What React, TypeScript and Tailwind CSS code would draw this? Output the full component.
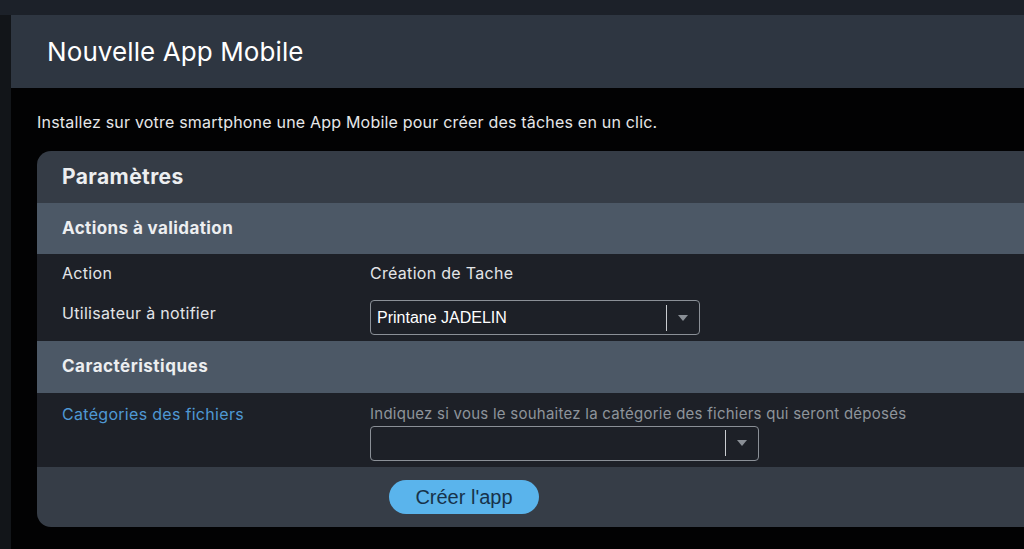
import React from "react";

const Caret: React.FC = () => (
    <svg width="10" height="6" viewBox="0 0 10 6" className="block">
        <path d="M0 0 L10 0 L5 6 Z" fill="#8a8f96" />
    </svg>
);

const SelectBox: React.FC<{ value?: string; width: string }> = ({ value, width }) => (
    <div className={`${width} h-[35px] flex items-center border border-[#8b9097] rounded-[4px] bg-[#1d2027]`}>
        <span className="flex-1 pl-[6px] text-[16px] text-white font-['Liberation_Sans',sans-serif]">{value}</span>
        <span className="w-px h-[26px] bg-[#c9ccd0]" />
        <span className="w-[32px] flex justify-center">
            <Caret />
        </span>
    </div>
);

const App: React.FC = () => {
    return (
        <div className="w-[1024px] h-[549px] overflow-hidden flex flex-col bg-[#1c2129] font-['Inter',sans-serif]">
            <div className="h-[15px] shrink-0 bg-[#1c2129]" />
            <div className="flex flex-1 min-h-0">
                <div className="w-[11px] shrink-0 bg-[#121519]" />
                <div className="flex-1 flex flex-col bg-[#020203]">
                    {/* header */}
                    <div className="h-[73px] shrink-0 bg-[#2e3641] flex items-center pl-[36px]">
                        <h1 className="text-[26px] text-white tracking-[0.1px]">Nouvelle App Mobile</h1>
                    </div>
                    <p className="pl-[26px] pt-[22px] text-[16px] text-[#e6e7e9] tracking-[0.2px]">
                        Installez sur votre smartphone une App Mobile pour créer des tâches en un clic.
                    </p>

                    {/* card */}
                    <div className="ml-[26px] mt-[17px] -mr-[20px] rounded-[14px] overflow-hidden">
                        <div className="h-[52px] bg-[#353c46] flex items-center pl-[25px]">
                            <span className="text-[21px] font-bold text-[#eceef0] tracking-[0.4px]">Paramètres</span>
                        </div>
                        <div className="h-[51px] bg-[#4c5866] flex items-center pl-[25px]">
                            <span className="text-[17px] font-bold text-[#eceef0] tracking-[0.4px]">Actions à validation</span>
                        </div>
                        <div className="bg-[#1d2027] pt-[8px] pb-[6px]">
                            <div className="flex items-center h-[22px]">
                                <span className="w-[333px] pl-[25px] text-[16px] text-[#e3e5e8] tracking-[0.3px]">Action</span>
                                <span className="text-[16px] text-[#e3e5e8] tracking-[0.3px]">Création de Tache</span>
                            </div>
                            <div className="flex items-start mt-[16px]">
                                <span className="w-[333px] pl-[25px] text-[16px] text-[#e3e5e8] pt-[1px] tracking-[0.3px]">Utilisateur à notifier</span>
                                <SelectBox value="Printane JADELIN" width="w-[330px]" />
                            </div>
                        </div>
                        <div className="h-[52px] bg-[#4c5866] flex items-center pl-[25px]">
                            <span className="text-[17px] font-bold text-[#eceef0] tracking-[0.5px]">Caractéristiques</span>
                        </div>
                        <div className="bg-[#1d2027] h-[74px] flex pt-[8px]">
                            <span className="w-[333px] pl-[25px] text-[16px] text-[#4f98d4] tracking-[0.3px] pt-[1px]">Catégories des fichiers</span>
                            <div className="flex flex-col pt-[2px]">
                                <span className="text-[15px] text-[#8e949b] tracking-[0.25px]">
                                    Indiquez si vous le souhaitez la catégorie des fichiers qui seront déposés
                                </span>
                                <SelectBox width="w-[389px]" />
                            </div>
                        </div>
                        <div className="h-[60px] bg-[#363d47] flex items-center pl-[352px]">
                            <button className="w-[150px] h-[34px] rounded-full bg-[#5ab4ec] text-[#17324a] text-[20px] font-['Liberation_Sans',sans-serif]">
                                Créer l'app
                            </button>
                        </div>
                    </div>
                </div>
            </div>
        </div>
    );
};

export default App;
